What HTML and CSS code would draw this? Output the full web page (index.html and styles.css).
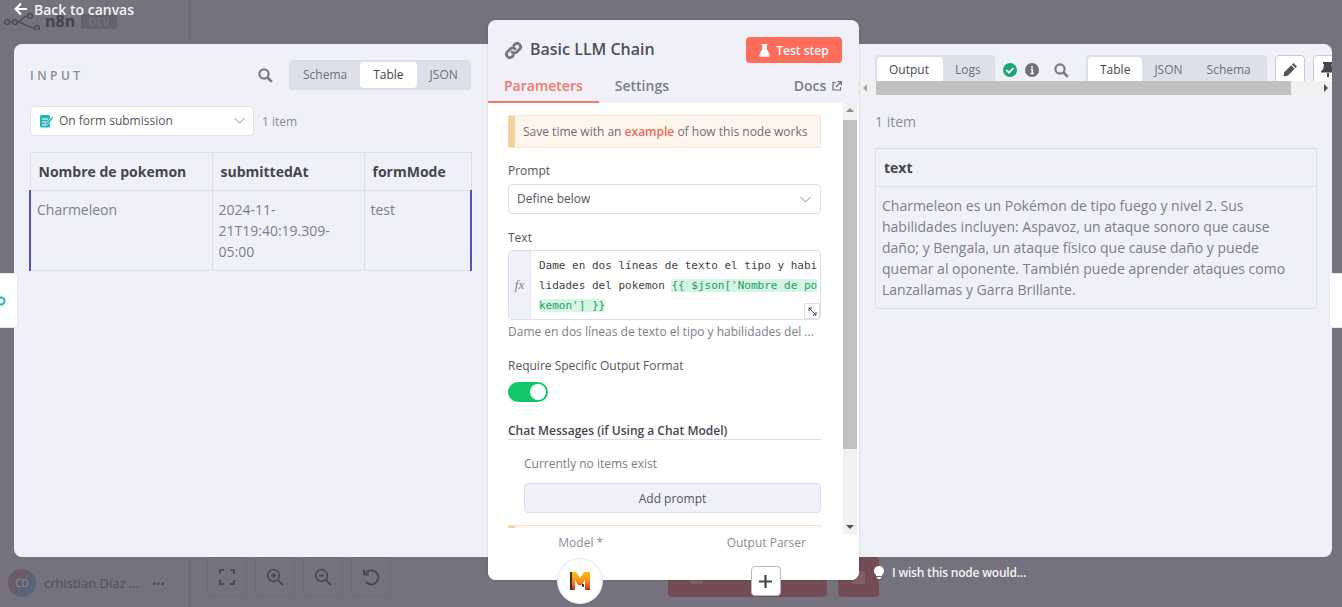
FILE: index.html
```html
<!DOCTYPE html>
<html lang="en">
<head>
  <meta charset="UTF-8" />
  <meta name="viewport" content="width=device-width, initial-scale=1.0" />
  <title>Basic LLM Chain</title>
  <link rel="stylesheet" href="styles.css">
</head>
<body>
  <!-- dimmed workflow editor behind the modal -->
  <div class="app">
    <aside class="sidebar">
      <div class="brand">
        <svg class="brand-logo" width="36" height="18" viewBox="0 0 36 18" fill="none" stroke="#4a4953" stroke-width="1.3">
          <circle cx="3" cy="10" r="2.4"/><circle cx="11" cy="10" r="2.4"/><circle cx="26" cy="4" r="2.4"/><circle cx="33" cy="16" r="2.4"/>
          <path d="M5.400 10h3.200M13.400 10c4.600 0 5-6 10.200-6M13.400 10c6 0 10 6 17.200 6"/>
        </svg>
        <span class="brand-name">n8n</span>
        <span class="brand-tag">DEV</span>
      </div>
      <div class="user">
        <span class="avatar">CD</span>
        <span class="user-name">crhistian Diaz ...</span>
        <span class="user-more">•••</span>
      </div>
    </aside>
    <main class="editor">
      <div class="toolbar">
        <button class="tool">
          <svg width="16" height="16" viewBox="0 0 16 16" fill="none" stroke="#4a4953" stroke-width="2"><path d="M1 5V1h4M11 1h4v4M15 11v4h-4M5 15H1v-4"/></svg>
        </button>
        <button class="tool">
          <svg width="18" height="18" viewBox="0 0 18 18" fill="none" stroke="#4a4953" stroke-width="1.800"><circle cx="7.500" cy="7.500" r="5.800"/><path d="M12 12l5 5M7.500 5v5M5 7.500h5"/></svg>
        </button>
        <button class="tool">
          <svg width="18" height="18" viewBox="0 0 18 18" fill="none" stroke="#4a4953" stroke-width="1.800"><circle cx="7.500" cy="7.500" r="5.800"/><path d="M12 12l5 5M5 7.500h5"/></svg>
        </button>
        <button class="tool">
          <svg width="18" height="18" viewBox="0 0 18 18" fill="none" stroke="#4a4953" stroke-width="2"><path d="M3.500 5.500A7 7 0 1 1 4 14"/><path d="M2 1.500v5h5"/></svg>
        </button>
        <div class="run-group">
          <div class="run-main"><span class="run-mark"></span></div>
          <div class="run-trash"><span class="run-mark"></span></div>
        </div>
      </div>
    </main>
  </div>

  <a class="back-link">
    <svg width="14" height="14" viewBox="0 0 14 14" fill="none" stroke="#fff" stroke-width="2.200"><path d="M13 7H2M7 1.500L1.600 7 7 12.500"/></svg>
    Back to canvas
  </a>

  <div class="ndv">
    <span class="handle handle-left">
      <svg width="10" height="12" viewBox="0 0 10 12" fill="none" stroke="#27b4b4" stroke-width="2"><circle cx="1" cy="6" r="3.500"/></svg>
    </span>
    <span class="handle handle-right"></span>

    <section class="input-panel">
      <div class="panel-head">
        <span class="panel-title">INPUT</span>
        <svg class="search-icon" width="15" height="15" viewBox="0 0 15 15" fill="none" stroke="#7b7b86"><circle cx="6" cy="6" r="4.600" stroke-width="2.200"/><path d="M9.500 9.500l4.300 4.300" stroke-width="2.600"/></svg>
        <div class="tabs tabs-input">
          <span class="tab">Schema</span>
          <span class="tab tab-on">Table</span>
          <span class="tab">JSON</span>
        </div>
      </div>
      <div class="source-row">
        <div class="source-select">
          <svg width="15" height="15" viewBox="0 0 15 15"><rect x="1" y="2" width="10" height="12.500" rx="1.500" fill="#22b5b5"/><path d="M3 6h6M3 9h4M3 12h3" stroke="#fff" stroke-width="1"/><path d="M6.500 10.500L13 3.500l1.500 1.500-6.500 7-2 .5z" fill="#22b5b5" stroke="#f0f1f8" stroke-width=".8"/></svg>
          <span>On form submission</span>
          <svg class="chevron" width="11" height="7" viewBox="0 0 11 7" fill="none" stroke="#8b8b96" stroke-width="1"><path d="M.5 1L5.500 6l5-5"/></svg>
        </div>
        <span class="count">1 item</span>
      </div>
      <table class="data-table input-table">
        <thead>
          <tr><th>Nombre de pokemon</th><th>submittedAt</th><th>formMode</th></tr>
        </thead>
        <tbody>
          <tr><td>Charmeleon</td><td>2024-11-21T19:40:19.309-05:00</td><td>test</td></tr>
        </tbody>
      </table>
    </section>

    <section class="node-card">
      <header class="node-head">
        <svg width="19" height="19" viewBox="0 0 18 18" fill="none" stroke="#77777f" stroke-width="2.700" stroke-linecap="round">
          <path d="M7.500 10.500a3.200 3.200 0 0 0 4.600 0l3-3a3.300 3.300 0 0 0-4.600-4.600L9.200 4.200"/>
          <path d="M10.500 7.500a3.200 3.200 0 0 0-4.600 0l-3 3a3.300 3.300 0 0 0 4.600 4.600l1.300-1.300"/>
        </svg>
        <h2 class="node-title">Basic LLM Chain</h2>
        <button class="test-btn">
          <svg width="11" height="13" viewBox="0 0 11 13" fill="#fff"><path d="M2.500 0h6v1.200H7.700v3.600l3 6.200c.3.800-.2 1.800-1.100 1.800H1.400C.5 12.800 0 11.800.3 11l3-6.200V1.200h-.8z"/></svg>
          Test step
        </button>
      </header>
      <nav class="node-tabs">
        <span class="node-tab node-tab-on">Parameters</span>
        <span class="node-tab">Settings</span>
        <span class="docs">Docs
          <svg class="docs-icon" width="10" height="10" viewBox="0 0 10 10" fill="none" stroke="#6f6f7a" stroke-width="1.200"><path d="M4 1.500H1v7.500h7.500V6M5.500.700h3.800v3.800M9.300.700L4 6"/></svg>
        </span>
      </nav>
      <div class="node-body">
        <div class="params">
          <div class="notice">Save time with an <b>example</b> of how this node works</div>
          <label class="field-label field-label-prompt">Prompt</label>
          <div class="select">
            Define below
            <svg class="chevron" width="11" height="7" viewBox="0 0 11 7" fill="none" stroke="#8b8b96" stroke-width="1"><path d="M.5 1L5.500 6l5-5"/></svg>
          </div>
          <label class="field-label field-label-text">Text</label>
          <div class="code-field">
            <span class="fx">fx</span>
            <div class="code">Dame en dos líneas de texto el tipo y habilidades del pokemon <mark>{{ $json['Nombre de pokemon'] }}</mark></div>
            <span class="expand">
              <svg width="9" height="9" viewBox="0 0 9 9" fill="none" stroke="#444" stroke-width="1"><path d="M1 4V1h3M8 5v3H5M1 1l7 7"/></svg>
            </span>
          </div>
          <p class="hint">Dame en dos líneas de texto el tipo y habilidades del ...</p>
          <label class="field-label field-label-switch">Require Specific Output Format</label>
          <span class="switch"><span class="switch-knob"></span></span>
          <h4 class="section-title">Chat Messages (if Using a Chat Model)</h4>
          <div class="collection">
            <p class="empty">Currently no items exist</p>
            <button class="add-btn">Add prompt</button>
          </div>
          <div class="notice notice-next"></div>
        </div>
        <div class="vscroll">
          <span class="arrow arrow-up"></span>
          <span class="vthumb"></span>
          <span class="arrow arrow-down"></span>
        </div>
      </div>
      <footer class="connectors">
        <div class="connector">
          <span class="connector-label">Model *</span>
          <span class="model-node">
            <svg width="20" height="18" viewBox="0 0 20 18">
              <defs><linearGradient id="mistral" x1="0" y1="0" x2="0" y2="1"><stop offset="0" stop-color="#f7c600"/><stop offset=".55" stop-color="#f58a1f"/><stop offset="1" stop-color="#e01f1f"/></linearGradient></defs>
              <path fill="url(#mistral)" d="M0 0h6l4 6 4-6h6v18h-5V8l-3 5H8L5 8v10H0z"/>
              <path fill="#222" d="M0 0h2v18H0zM12 12h2v3h-2z" opacity=".85"/>
            </svg>
          </span>
        </div>
        <div class="connector connector-parser">
          <span class="connector-label">Output Parser</span>
          <span class="plus-node">
            <svg width="13" height="13" viewBox="0 0 13 13" stroke="#45454e" stroke-width="2.200"><path d="M6.500 0v13M0 6.500h13"/></svg>
          </span>
        </div>
      </footer>
    </section>

    <section class="output-panel">
      <div class="output-head">
        <div class="tabs tabs-run">
          <span class="tab tab-on">Output</span>
          <span class="tab">Logs</span>
        </div>
        <svg class="ok-icon" width="14" height="14" viewBox="0 0 14 14"><circle cx="7" cy="7" r="7" fill="#1ba672"/><path d="M3.500 7.200l2.500 2.500 4.500-4.700" fill="none" stroke="#fff" stroke-width="1.800"/></svg>
        <svg class="info-icon" width="14" height="14" viewBox="0 0 14 14"><circle cx="7" cy="7" r="7" fill="#6f6f7a"/><path d="M7 3v2M5.800 6.500H7.300v4M5.500 10.500h3.500" fill="none" stroke="#fff" stroke-width="1.500"/></svg>
        <svg class="search-icon-out" width="15" height="15" viewBox="0 0 15 15" fill="none" stroke="#7b7b86"><circle cx="6" cy="6" r="4.600" stroke-width="2.200"/><path d="M9.500 9.500l4.300 4.300" stroke-width="2.600"/></svg>
        <div class="tabs tabs-view">
          <span class="tab tab-on">Table</span>
          <span class="tab">JSON</span>
          <span class="tab">Schema</span>
        </div>
        <span class="square-btn">
          <svg width="15" height="15" viewBox="0 0 15 15" fill="#55555e"><path d="M10.500 1l3.500 3.500-1.500 1.500L9 2.500zM8.200 3.300l3.500 3.500-7 7L0.500 14.500l.7-4.200z"/></svg>
        </span>
        <span class="square-btn square-pin">
          <svg width="14" height="15" viewBox="0 0 14 15" fill="#45454e"><path d="M2 0h10v2h-1.500l.7 5c1.500.7 2.300 2 2.300 3.500H0C0 9 .8 7.700 2.300 7l.7-5H2zM6 11h2v4H6z"/></svg>
        </span>
      </div>
      <div class="hscroll">
        <span class="arrow arrow-left"></span>
        <span class="hthumb"></span>
        <span class="arrow arrow-right"></span>
      </div>
      <div class="output-body">
        <p class="count count-out">1 item</p>
        <table class="data-table output-table">
          <thead><tr><th>text</th></tr></thead>
          <tbody>
            <tr><td>Charmeleon es un Pokémon de tipo fuego y nivel 2. Sus habilidades incluyen: Aspavoz, un ataque sonoro que cause daño; y Bengala, un ataque físico que cause daño y puede quemar al oponente. También puede aprender ataques como Lanzallamas y Garra Brillante.</td></tr>
          </tbody>
        </table>
      </div>
    </section>
  </div>

  <div class="feedback">
    <svg width="10" height="13" viewBox="0 0 10 13" fill="#fff"><path d="M5 0a5 5 0 0 1 3 9v1H2V9a5 5 0 0 1 3-9zM2.800 11h4.400v.8L6 13H4l-1.200-1.200z"/></svg>
    I wish this node would...
  </div>
</body>
</html>
```

FILE: styles.css
```css
* {
  box-sizing: border-box;
}
html, body {
  margin: 0;
  height: 100%;
}
body {
  position: relative;
  width: 1342px;
  height: 607px;
  overflow: hidden;
  font-family: "Open Sans", sans-serif;
  font-size: 12px;
  color: #555560;
  background: #73727e;
}
button {
  font-family: inherit;
}

/* background app */
.app {
  display: flex;
  height: 100%;
}
.sidebar {
  width: 190px;
  border-right: 1px solid #6a6975;
  display: flex;
  flex-direction: column;
  justify-content: space-between;
  padding: 11px 0 10px 4px;
}
.brand {
  display: flex;
  align-items: center;
  height: 20px;
}
.brand-name {
  margin-left: 5px;
  font-size: 16px;
  font-weight: 700;
  color: #44434d;
}
.brand-tag {
  margin-left: 6px;
  padding: 0 7px;
  height: 15px;
  line-height: 15px;
  font-size: 11px;
  font-weight: 700;
  color: #73727e;
  background: #63626d;
  border-radius: 2px;
}
.user {
  display: flex;
  align-items: center;
  padding-left: 4px;
}
.avatar {
  width: 28px;
  height: 28px;
  line-height: 28px;
  text-align: center;
  border-radius: 50%;
  font-size: 10px;
  color: #8d8c98;
  background: linear-gradient(120deg, #77545c, #4e6a80);
}
.user-name {
  margin-left: 8px;
  font-size: 13px;
  color: #4f4e59;
}
.user-more {
  margin-left: 13px;
  font-size: 11px;
  letter-spacing: 0;
  color: #4a4953;
}
.editor {
  flex: 1;
  display: flex;
  flex-direction: column;
  justify-content: flex-end;
}
.toolbar {
  display: flex;
  align-items: flex-start;
  gap: 8px;
  padding: 0 0 10px 17px;
}
.tool {
  width: 40px;
  height: 40px;
  padding: 0;
  display: flex;
  align-items: center;
  justify-content: center;
  background: #73727e;
  border: 1px solid #6c6b77;
  border-radius: 4px;
}
.run-group {
  display: flex;
  gap: 11px;
  margin-left: 269px;
}
.run-main, .run-trash {
  height: 40px;
  display: flex;
  align-items: center;
  justify-content: center;
  background: #744c55;
  border-radius: 4px;
}
.run-main {
  width: 159px;
  justify-content: flex-start;
  padding-left: 22px;
}
.run-trash {
  width: 41px;
}
.run-mark {
  width: 13px;
  height: 13px;
  background: #7f6068;
}
.back-link {
  position: absolute;
  left: 14px;
  top: 0;
  display: flex;
  align-items: center;
  gap: 6px;
  height: 18px;
  font-size: 14px;
  font-weight: 600;
  color: #f4f4f6;
}
.feedback {
  position: absolute;
  left: 874px;
  top: 564px;
  display: flex;
  align-items: center;
  gap: 8px;
  font-weight: 600;
  letter-spacing: -0.2px;
  color: #f2f2f5;
}

/* modal */
.ndv {
  position: absolute;
  left: 14px;
  top: 44px;
  width: 1318px;
  height: 513px;
  display: flex;
  align-items: flex-start;
  background: #f0f1f8;
  border-radius: 8px;
}
.handle {
  position: absolute;
  top: 229px;
  height: 55px;
  background: #fff;
  border-radius: 0 4px 4px 0;
  border: 1px solid #e6e7ef;
  display: flex;
  align-items: center;
  overflow: hidden;
}
.handle-left {
  left: -14px;
  width: 18px;
  border-left: 0;
}
.handle-right {
  right: -10px;
  width: 13px;
  border-right: 0;
  border-radius: 4px 0 0 4px;
}

.input-panel {
  width: 474px;
  flex: none;
  padding: 16px 17px 0 16px;
}
.panel-head {
  display: flex;
  align-items: center;
  height: 30px;
}
.panel-title {
  font-size: 12px;
  font-weight: 600;
  letter-spacing: 3.5px;
  color: #8c8c96;
  flex: 1;
}
.search-icon {
  margin-right: 16px;
}
.tabs {
  display: flex;
  background: #dde0ea;
  border-radius: 4px;
  padding: 2px;
}
.tab {
  height: 26px;
  line-height: 26px;
  padding: 0 12px;
  font-size: 12px;
  color: #6f6f7a;
  border-radius: 4px;
}
.tab-on {
  background: #fff;
  color: #45454e;
}
.tabs-input {
  width: 182px;
  height: 30px;
  padding-left: 1px;
}
.tabs-input .tab {
  padding: 0 13px;
}
.source-row {
  display: flex;
  align-items: center;
  gap: 8px;
  margin-top: 16px;
}
.source-select {
  width: 224px;
  height: 30px;
  display: flex;
  align-items: center;
  gap: 5px;
  padding: 0 8px 2px;
  background: #fff;
  border: 1px solid #e0e2ec;
  border-radius: 4px;
  color: #55555e;
}
.source-select .chevron {
  margin-left: auto;
}
.count {
  margin: 0;
  color: #8c8c96;
}
.data-table {
  border-collapse: collapse;
  table-layout: fixed;
  font-size: 14px;
  width: 442px;
}
.data-table th {
  height: 38px;
  padding: 0 8px;
  text-align: left;
  font-weight: 700;
  color: #45454e;
  border: 1px solid #dcdfeb;
}
.data-table td {
  padding: 8px 6px;
  line-height: 21px;
  vertical-align: top;
  color: #7d7d87;
  border: 1px solid #dcdfeb;
}
.input-table {
  width: 443px;
  margin: 16px 0 0 -1px;
}
.input-table th:nth-child(1) {
  width: 182px;
}
.input-table th:nth-child(2) {
  width: 152px;
}
.input-table tbody td {
  height: 80px;
}
.input-table tbody td:first-child {
  border-left: 2px solid #5b4fb5;
}
.input-table tbody td:last-child {
  border-right: 2px solid #5b4fb5;
}

.node-card {
  position: relative;
  width: 371px;
  height: 560px;
  margin-top: -24px;
  flex: none;
  display: flex;
  flex-direction: column;
  background: #f0f1f8;
  border-radius: 8px;
  box-shadow: 0 0 3px rgba(0, 0, 0, 0.15);
}
.node-head {
  display: flex;
  align-items: center;
  padding: 17px 17px 0 16px;
  height: 43px;
}
.node-title {
  margin: 0 0 2px 7px;
  flex: 1;
  font-size: 16px;
  font-weight: 600;
  color: #4f4f59;
}
.test-btn {
  width: 96px;
  height: 26px;
  display: flex;
  align-items: center;
  justify-content: center;
  gap: 6px;
  border: 0;
  border-radius: 4px;
  background: #ff6d5a;
  color: #fff;
  font-size: 12px;
  font-weight: 600;
}
.node-tabs {
  display: flex;
  height: 40px;
  padding-top: 11px;
}
.node-tab {
  height: 29px;
  padding: 2px 16px 0;
  font-size: 14px;
  font-weight: 600;
  color: #7b7b86;
}
.node-tab-on {
  color: #f2776b;
  border-bottom: 2px solid #f2776b;
}
.docs {
  margin-left: auto;
  padding: 2px 17px 0 0;
  font-size: 14px;
  font-weight: 600;
  color: #7b7b86;
}
.docs-icon {
  margin-left: 2px;
}
.node-body {
  flex: none;
  height: 431px;
  display: flex;
  background: #fff;
}
.params {
  width: 355px;
  height: 425px;
  padding: 12px 22px 0 20px;
  overflow: hidden;
}
.notice {
  height: 33px;
  line-height: 31px;
  padding-left: 8px;
  background: #fef6ec;
  border: 1px solid #f6e4cc;
  border-left: 7px solid #f3d19e;
  border-radius: 2px;
  font-size: 12px;
  white-space: nowrap;
  color: #6f6f7a;
}
.notice b {
  font-weight: 600;
  color: #ee6a5c;
}
.notice-next {
  margin-top: 12px;
}
.field-label {
  display: block;
  margin-top: 14px;
  height: 21px;
  line-height: 18px;
  color: #555560;
}
.field-label-prompt {
  height: 22px;
}
.field-label-text {
  margin-top: 15px;
}
.field-label-switch {
  margin-top: 15px;
  height: 25px;
}
.select {
  position: relative;
  height: 30px;
  line-height: 28px;
  padding-left: 8px;
  background: #fff;
  border: 1px solid #dcdfeb;
  border-radius: 4px;
  color: #555560;
}
.select .chevron {
  position: absolute;
  right: 9px;
  top: 11px;
}
.code-field {
  position: relative;
  display: flex;
  height: 70px;
  background: #fff;
  border: 1px solid #dcdfeb;
  border-radius: 4px;
  overflow: hidden;
}
.fx {
  width: 22px;
  flex: none;
  line-height: 68px;
  text-align: center;
  font-family: "Liberation Serif", serif;
  font-style: italic;
  font-size: 13px;
  color: #7d7d87;
  background: #f0f1f8;
  border-right: 1px solid #e5e7f0;
}
.code {
  flex: 1;
  padding: 5px 0 0 8px;
  font-family: "DejaVu Sans Mono", monospace;
  font-size: 11px;
  line-height: 20px;
  color: #3f3f47;
  word-break: break-all;
}
.code mark {
  background: #d6f5e4;
  color: #1aa163;
}
.expand {
  position: absolute;
  right: 0;
  bottom: 0;
  width: 16px;
  height: 16px;
  display: flex;
  align-items: center;
  justify-content: center;
  background: #fff;
  border: 1px solid #dcdfeb;
  border-radius: 2px 0 0 0;
}
.hint {
  margin: 2px 0 0;
  height: 20px;
  line-height: 20px;
  white-space: nowrap;
  color: #7d7d87;
}
.switch {
  display: block;
  width: 40px;
  height: 20px;
  padding: 2px;
  background: #13c767;
  border-radius: 10px;
}
.switch-knob {
  display: block;
  width: 16px;
  height: 16px;
  margin-left: 20px;
  background: #fff;
  border-radius: 50%;
}
.section-title {
  margin: 20px 0 0;
  height: 18px;
  line-height: 17px;
  font-size: 12px;
  font-weight: 600;
  color: #45454e;
  border-bottom: 1px solid #dcdfeb;
}
.collection {
  padding-left: 16px;
}
.empty {
  margin: 14px 0 0;
  height: 20px;
  line-height: 20px;
  color: #7d7d87;
}
.add-btn {
  width: 100%;
  height: 30px;
  margin-top: 9px;
  background: #f0f1f8;
  border: 1px solid #dcdfeb;
  border-radius: 4px;
  font-size: 12px;
  color: #555560;
}
.vscroll {
  width: 14px;
  margin-right: 2px;
  display: flex;
  flex-direction: column;
  align-items: center;
  background: #f1f1f1;
  padding: 5px 0;
}
.vthumb {
  width: 14px;
  height: 329px;
  margin-top: 8px;
  background: #c1c1c1;
}
.arrow {
  width: 0;
  height: 0;
  border: 4px solid transparent;
}
.arrow-up {
  border-top: 0;
  border-bottom-color: #8c8c8c;
}
.arrow-down {
  margin-top: auto;
  border-bottom: 0;
  border-top-color: #505050;
}
.connectors {
  flex: 1;
  display: flex;
  background: #fff;
  border-radius: 0 0 8px 8px;
}
.connector {
  position: relative;
  width: 186px;
  text-align: center;
}
.connector-label {
  display: block;
  line-height: 18px;
  color: #8c8c96;
}
.model-node {
  position: absolute;
  left: 69px;
  top: 24px;
  width: 46px;
  height: 46px;
  display: flex;
  align-items: center;
  justify-content: center;
  background: #fff;
  border: 1px solid #e4e5ee;
  border-radius: 50%;
}
.plus-node {
  position: absolute;
  left: 77px;
  top: 32px;
  width: 30px;
  height: 30px;
  display: flex;
  align-items: center;
  justify-content: center;
  background: #fff;
  border: 1px solid #b9b9c2;
  border-radius: 4px;
}

.output-panel {
  flex: 1;
  min-width: 0;
  overflow: hidden;
  border-radius: 0 8px 8px 0;
}
.output-head {
  display: flex;
  align-items: flex-start;
  height: 37px;
  padding: 11px 0 0 16px;
  overflow: hidden;
}
.output-head .tabs {
  height: 30px;
  flex: none;
}
.tabs-run {
  width: 120px;
}
.tabs-run .tab-on {
  padding-right: 14px;
}
.ok-icon {
  margin: 8px 0 0 8px;
  flex: none;
}
.info-icon {
  margin: 8px 0 0 8px;
  flex: none;
}
.search-icon-out {
  margin: 8px 0 0 15px;
  flex: none;
}
.tabs-view {
  width: 181px;
  margin-left: 17px;
}
.square-btn {
  width: 30px;
  height: 34px;
  margin-left: 8px;
  flex: none;
  display: flex;
  padding-top: 6px;
  justify-content: center;
  background: #fff;
  border: 1px solid #c9cad3;
  border-radius: 4px;
}
.hscroll {
  height: 14px;
  display: flex;
  align-items: center;
  background: #f1f1f1;
  padding-left: 4px;
  padding-right: 4px;
}
.hthumb {
  width: 415px;
  height: 14px;
  margin-left: 9px;
  background: #c1c1c1;
}
.arrow-left {
  border-left: 0;
  border-right-color: #a5a5a5;
}
.arrow-right {
  margin-left: auto;
  border-right: 0;
  border-left-color: #505050;
}
.output-body {
  padding: 17px 16px 0;
}
.count-out {
  height: 20px;
  line-height: 20px;
  font-size: 14px;
}
.output-table {
  margin-top: 16px;
}
.output-table td {
  padding: 8px 6px;
}
```
